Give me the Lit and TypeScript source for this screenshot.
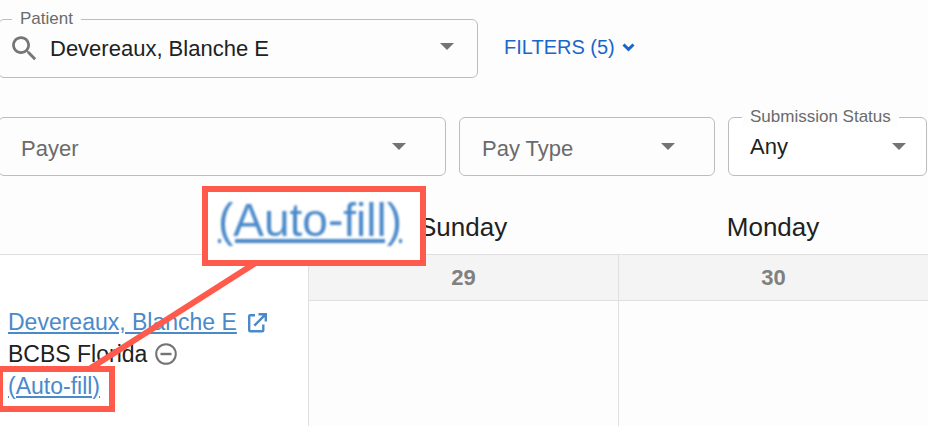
import { LitElement, html, css, nothing } from "lit";
import { customElement, property } from "lit/decorators.js";

const arrow = html`<svg class="arrow" viewBox="0 0 14 7" aria-hidden="true">
  <path d="M0 0H14L7 7Z" fill="#737373" />
</svg>`;

@customElement("filter-field")
class FilterField extends LitElement {
  @property() name = "";
  @property() label = "";
  @property() value = "";
  @property() kind = "select";

  static styles = css`
    :host {
      display: block;
      min-width: 0;
    }
    .field {
      position: relative;
      display: flex;
      align-items: center;
      height: 59px;
      box-sizing: border-box;
      border: 1px solid #bdbdbd;
      border-radius: 6px;
    }
    .field.solid {
      background: #ffffff;
    }
    .label {
      position: absolute;
      left: 13px;
      top: -11px;
      padding: 0 8px;
      font-size: 17px;
      line-height: 20px;
      color: #6b6b6b;
      background: #fdfdfd;
      white-space: nowrap;
      pointer-events: none;
    }
    .field.empty .label {
      top: 18px;
      padding: 0 9px;
      font-size: 22px;
      line-height: 26px;
      background: none;
    }
    .control {
      flex: 1;
      min-width: 0;
      height: 57px;
      box-sizing: border-box;
      padding: 0 21px;
      border: 0;
      outline: 0;
      margin: 0;
      appearance: none;
      background: transparent;
      font: inherit;
      font-size: 22px;
      color: #212121;
    }
    .control.with-icon {
      padding-left: 9px;
    }
    .search {
      flex: none;
      width: 33px;
      height: 33px;
      margin-left: 9px;
    }
    .arrow {
      flex: none;
      width: 14px;
      height: 7px;
      margin-right: 20px;
      pointer-events: none;
    }
    .field.empty .arrow {
      margin-right: 39px;
    }
    .field.lookup .arrow {
      margin-right: 23px;
      margin-bottom: 4px;
    }
  `;

  render() {
    const search = this.kind === "search";
    const state = !this.value ? "empty" : search ? "lookup" : "solid";
    return html`<div class="field ${state}">
      <label class="label" for=${this.name}>${this.label}</label>
      ${search
        ? html`<svg class="search" viewBox="0 0 24 24" aria-hidden="true">
              <path
                fill="#757575"
                d="M15.5 14h-.79l-.28-.27C15.41 12.59 16 11.11 16 9.5 16 5.91 13.09 3 9.5 3S3 5.91 3 9.5 5.91 16 9.5 16c1.61 0 3.09-.59 4.23-1.57l.27.28v.79l5 4.99L20.49 19l-4.99-5zm-6 0C7.01 14 5 11.99 5 9.5S7.01 5 9.5 5 14 7.01 14 9.5 11.99 14 9.5 14z"
              />
            </svg>
            <input class="control with-icon" id=${this.name} type="text" role="combobox" aria-expanded="false" .value=${this.value} />`
        : html`<select class="control" id=${this.name}>
            <option>${this.value}</option>
          </select>`}
      ${arrow}
    </div>`;
  }
}

@customElement("app-root")
class AppRoot extends LitElement {
  static styles = css`
    :host {
      display: block;
      position: relative;
      min-height: 100vh;
      overflow: hidden;
      background: #fdfdfd;
      color: #212121;
      font-family: "Liberation Sans", Arial, sans-serif;
    }
    .filters {
      display: grid;
      gap: 39px;
      margin: 0 1px 0 -2px;
      padding-top: 19px;
    }
    .row {
      display: grid;
      align-items: center;
    }
    .first {
      grid-template-columns: 480fr 423fr;
      gap: 26px;
    }
    .second {
      grid-template-columns: 448fr 256fr 199fr;
      gap: 13px;
    }
    .toggle {
      justify-self: start;
      display: flex;
      align-items: center;
      gap: 7px;
      padding: 0 0 3px;
      border: 0;
      background: none;
      font: inherit;
      font-size: 20px;
      line-height: 24px;
      color: #1966ca;
      cursor: pointer;
    }
    .chevron {
      width: 13px;
      height: 10px;
    }
    .calendar {
      width: 100%;
      margin-top: 24px;
      table-layout: fixed;
      border-collapse: separate;
      border-spacing: 0;
    }
    .who {
      width: 33.2%;
    }
    .calendar th,
    .calendar td {
      padding: 0;
      box-sizing: border-box;
    }
    .calendar .day {
      height: 55px;
      font-size: 26px;
      font-weight: 400;
      border-bottom: 1px solid #e0e0e0;
    }
    .calendar .date {
      height: 46px;
      font-size: 22px;
      font-weight: 700;
      text-align: center;
      color: #808080;
      background: #f4f4f4;
      border-bottom: 1px solid #e0e0e0;
      border-left: 1px solid #e0e0e0;
    }
    .calendar .slot {
      height: 125px;
      border-left: 1px solid #e0e0e0;
    }
    .calendar .patient {
      padding: 51px 0 0 8px;
      background: #ffffff;
      vertical-align: top;
      text-align: left;
      font-size: 23px;
      font-weight: 400;
    }
    .line {
      display: flex;
      align-items: center;
      height: 32px;
      gap: 8px;
      white-space: nowrap;
    }
    .link {
      color: #4a89ca;
      text-decoration: underline;
      text-decoration-thickness: 2px;
      text-underline-offset: 2px;
    }
    .open {
      display: flex;
    }
    .icon {
      width: 22px;
      height: 22px;
    }
    .callout,
    .target,
    .leader {
      position: absolute;
      pointer-events: none;
    }
    .callout,
    .target {
      box-sizing: border-box;
      border: 6px solid #ff5a4b;
    }
    .callout {
      left: 202px;
      top: 186px;
      width: 224px;
      height: 80px;
      padding-left: 10px;
      background: #ffffff;
      font-size: 46px;
      line-height: 56px;
      color: #4a89ca;
      white-space: nowrap;
    }
    .zoomed {
      text-decoration: underline;
      text-decoration-thickness: 4px;
      text-underline-offset: 3px;
      filter: blur(1px);
    }
    .target {
      left: -3px;
      top: 366px;
      width: 118px;
      height: 46px;
    }
    .leader {
      left: 0;
      top: 186px;
      width: 426px;
      height: 226px;
    }
  `;

  render() {
    const days = [
      { name: "Sunday", date: 29 },
      { name: "Monday", date: 30 },
    ];
    return html`
      <form class="filters">
        <div class="row first">
          <filter-field name="patient" label="Patient" value="Devereaux, Blanche E" kind="search"></filter-field>
          <button class="toggle" type="button">
            FILTERS (5)
            <svg class="chevron" viewBox="0 0 13 10" aria-hidden="true">
              <path d="M1.5 2.5L6.5 7.3L11.5 2.5" fill="none" stroke="#1966ca" stroke-width="3" />
            </svg>
          </button>
        </div>
        <div class="row second">
          <filter-field name="payer" label="Payer"></filter-field>
          <filter-field name="pay-type" label="Pay Type"></filter-field>
          <filter-field name="status" label="Submission Status" value="Any"></filter-field>
        </div>
      </form>
      <table class="calendar">
        <thead>
          <tr>
            <td class="day who"></td>
            ${days.map((d) => html`<th class="day" scope="col">${d.name}</th>`)}
          </tr>
        </thead>
        <tbody>
          <tr>
            <th class="patient" rowspan="2" scope="rowgroup">
              <div class="line">
                <a class="link" href="#patient">Devereaux, Blanche E</a>
                <a class="open" href="#open" aria-label="Open patient">
                  <svg class="icon" viewBox="0 0 22 22" fill="none" stroke="#4a89ca" stroke-width="2.4">
                    <path d="M10 4.2H5.2Q4.2 4.2 4.2 5.2V19.2Q4.2 20.200 5.2 20.200H17.3Q18.3 20.200 18.3 19.2V13.500" />
                    <path d="M13.5 3.2H20.8V10.5M20.3 3.7L9.3 14.7" />
                  </svg>
                </a>
              </div>
              <div class="line">
                BCBS Florida
                <svg class="icon" viewBox="0 0 22 22" fill="none" stroke="#737373" stroke-width="2" aria-hidden="true">
                  <circle cx="11" cy="11" r="9.8" />
                  <path d="M5.5 11H16.5" stroke-width="2.4" />
                </svg>
              </div>
              <div class="line"><a class="link" href="#autofill">(Auto-fill)</a></div>
            </th>
            ${days.map((d) => html`<td class="date">${d.date}</td>`)}
          </tr>
          <tr>
            ${days.map(() => html`<td class="slot">${nothing}</td>`)}
          </tr>
        </tbody>
      </table>
      <svg class="leader" viewBox="0 0 426 226" aria-hidden="true">
        <path d="M257 76L90 182.500" stroke="#ff5a4b" stroke-width="6" />
      </svg>
      <div class="target"></div>
      <div class="callout" aria-hidden="true"><span class="zoomed">(Auto-fill)</span></div>
    `;
  }
}
